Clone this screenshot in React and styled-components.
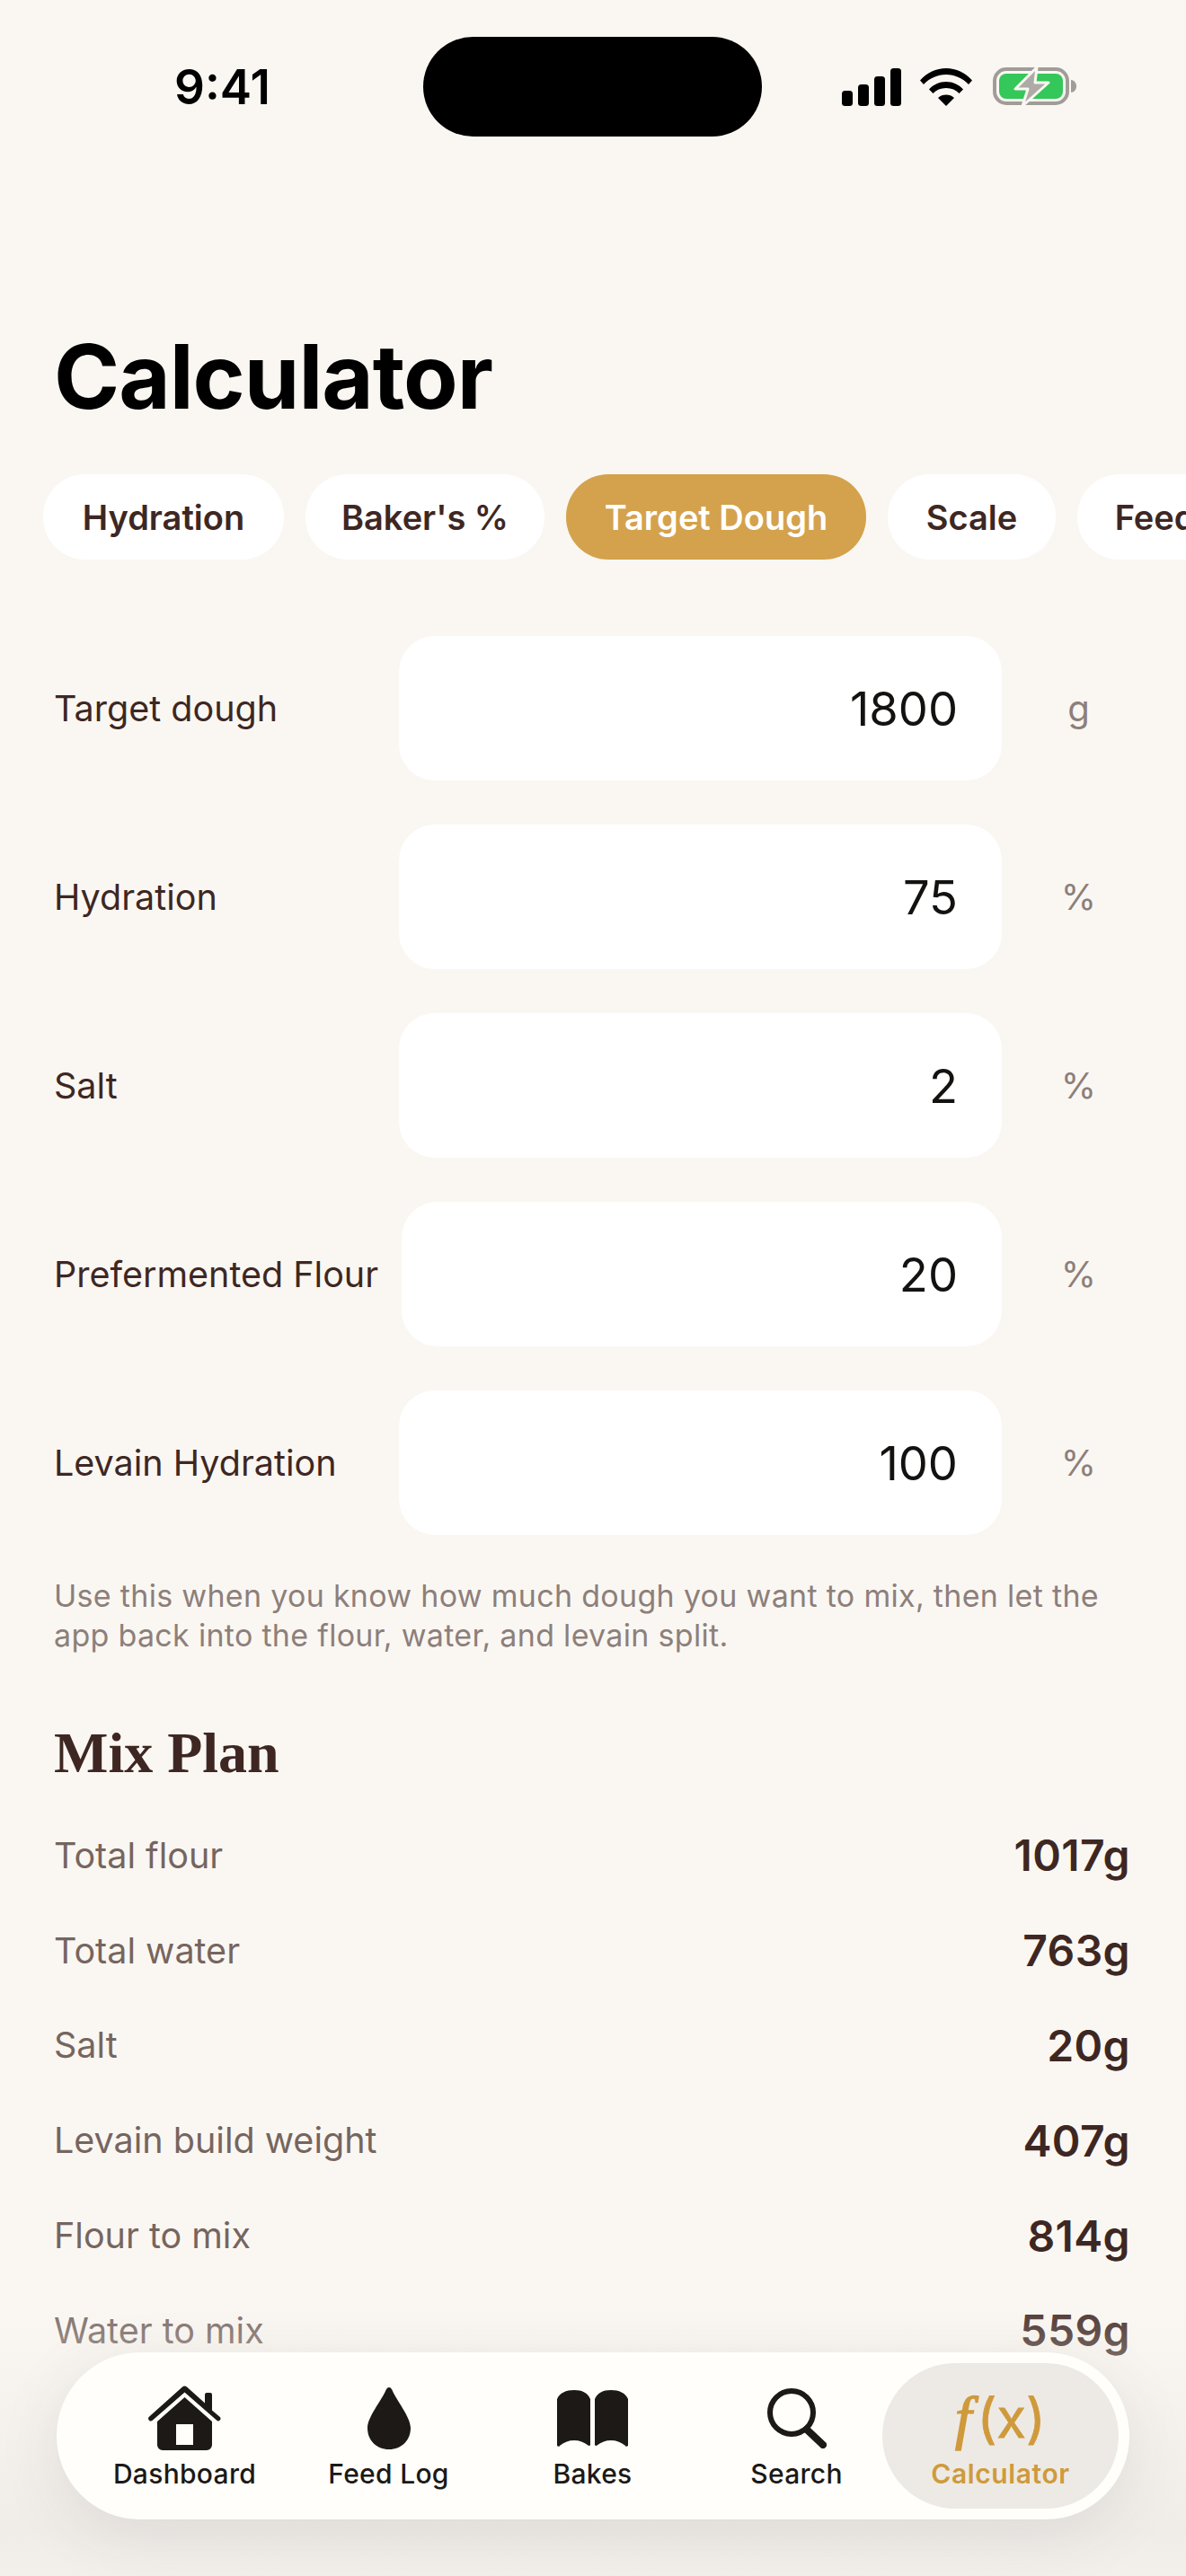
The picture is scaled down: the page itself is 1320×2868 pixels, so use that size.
import React from 'react';
import styled, { createGlobalStyle } from 'styled-components';

const GlobalStyle = createGlobalStyle`
  html, body {
    margin: 0;
    padding: 0;
    background: #faf7f2;
  }
  * {
    box-sizing: border-box;
  }
`;

const Screen = styled.div`
  position: relative;
  width: 1320px;
  height: 2868px;
  overflow: hidden;
  background: #faf7f2;
  font-family: Inter, "Liberation Sans", sans-serif;
  color: #3e2723;
`;

const StatusBar = styled.div`
  height: 361px;
  padding-top: 41px;
  display: grid;
  grid-template-columns: 471px 377px 1fr;
  align-items: start;
`;

const Time = styled.div`
  padding-left: 194px;
  padding-top: 29px;
  font-size: 53px;
  line-height: 54px;
  font-weight: 600;
  color: #000;
`;

const Island = styled.div`
  height: 111px;
  border-radius: 56px;
  background: #000;
`;

const StatusIcons = styled.div`
  display: flex;
  align-items: center;
  gap: 21px;
  padding-left: 89px;
  padding-top: 33px;
`;

const Title = styled.h1`
  margin: 0;
  padding-left: 60px;
  font-size: 99px;
  line-height: 116px;
  font-weight: 700;
  letter-spacing: -1px;
  color: #000;
`;

const ChipRow = styled.div`
  display: flex;
  gap: 24px;
  margin-top: 51px;
  padding-left: 48px;
  overflow: hidden;
`;

const Chip = styled.div`
  flex: none;
  width: ${(p) => p.$width}px;
  height: 95px;
  border-radius: 47px;
  display: flex;
  align-items: center;
  justify-content: center;
  font-size: 38px;
  font-weight: 600;
  white-space: nowrap;
  background: ${(p) => (p.$active ? '#d4a24c' : '#fff')};
  color: ${(p) => (p.$active ? '#fff' : '#3e2723')};
`;

const Form = styled.div`
  margin-top: 85px;
  padding: 0 60px;
  display: flex;
  flex-direction: column;
  gap: 49px;
`;

const FieldRow = styled.div`
  display: flex;
  align-items: center;
  gap: 26px;
`;

const FieldLabel = styled.div`
  flex: none;
  min-width: 358px;
  font-size: 39.5px;
  color: #3e2723;
`;

const Input = styled.div`
  flex: 1;
  height: 161px;
  padding-right: 49px;
  border-radius: 40px;
  background: #fff;
  display: flex;
  align-items: center;
  justify-content: flex-end;
  font-size: 52.5px;
  color: #141210;
`;

const Unit = styled.div`
  flex: none;
  width: 119px;
  text-align: center;
  font-size: 40px;
  color: #8d7f7b;
`;

const Note = styled.p`
  margin: 46px 0 0;
  padding: 0 60px;
  font-size: 34px;
  line-height: 44px;
  letter-spacing: 0.3px;
  color: #8d7f7b;
`;

const SectionTitle = styled.h2`
  margin: 71px 0 0;
  padding-left: 60px;
  font-family: "Liberation Serif", serif;
  font-size: 64px;
  line-height: 76px;
  font-weight: 700;
  color: #3e2723;
`;

const Plan = styled.div`
  margin-top: 23px;
  padding: 0 62px 0 60px;
  display: flex;
  flex-direction: column;
`;

const PlanRow = styled.div`
  height: 105.8px;
  display: flex;
  align-items: center;
  justify-content: space-between;
`;

const PlanLabel = styled.div`
  font-size: 39.5px;
  color: #76655f;
`;

const PlanValue = styled.div`
  font-size: 48px;
  font-weight: 600;
  letter-spacing: 0.4px;
  color: #3e2723;
`;

const BottomFade = styled.div`
  position: absolute;
  left: 0;
  right: 0;
  bottom: 0;
  height: 340px;
  background: linear-gradient(to bottom, rgba(250, 247, 242, 0), rgba(247, 244, 240, 0.17) 18%, rgba(242, 239, 235, 0.8) 60%, #f0ede9 85%, #f3f0ec);
`;

const TabBar = styled.nav`
  position: absolute;
  left: 63px;
  top: 2619px;
  width: 1194px;
  height: 186px;
  padding: 0 29px;
  border-radius: 93px;
  background: #fffefa;
  box-shadow: 0 16px 70px rgba(60, 50, 40, 0.1);
  display: grid;
  grid-template-columns: repeat(5, 227px);
`;

const Tab = styled.div`
  display: flex;
  flex-direction: column;
  align-items: center;
  border-radius: 81px;
  padding-top: ${(p) => (p.$active ? '24px' : '36px')};
  margin: ${(p) => (p.$active ? '12px -18px 12px -18px' : '0')};
  background: ${(p) => (p.$active ? '#edeae5' : 'transparent')};
  color: ${(p) => (p.$active ? '#cf9a3c' : '#1c1917')};
`;

const TabIcon = styled.div`
  height: 74px;
  display: flex;
  align-items: center;
  justify-content: center;
`;

const TabLabel = styled.div`
  margin-top: 6px;
  font-size: 30px;
  line-height: 38px;
  font-weight: ${(p) => (p.$active ? 600 : 500)};
  letter-spacing: ${(p) => (p.$active ? '0.6px' : '0.3px')};
`;

const FxGlyph = styled.div`
  font-size: 60px;
  line-height: 74px;
  font-weight: 400;
  white-space: nowrap;
  -webkit-text-stroke: 0.8px #cf9a3c;

  i {
    font-family: "Liberation Serif", serif;
    font-size: 66px;
    margin-right: 6px;
    -webkit-text-stroke: 1.6px #cf9a3c;
  }
`;

const SignalIcon = () => (
  <svg width="66" height="42" viewBox="0 0 66 42" fill="#000">
    <rect x="0" y="25" width="12" height="17" rx="3.5" />
    <rect x="18" y="18" width="12" height="24" rx="3.5" />
    <rect x="36" y="9" width="12" height="33" rx="3.5" />
    <rect x="54" y="0" width="12" height="42" rx="3.5" />
  </svg>
);

const WifiIcon = () => (
  <svg width="58" height="42" viewBox="0 0 58 42" fill="#000">
    <path d="M0 13.5C7.5 5 18 0 29 0s21.500 5 29 13.500l-4 4.500C47.500 11 38.500 7 29 7S10.500 11 4 18z" />
    <path d="M10 23.500C15 18 21.500 15 29 15s14 3 19 8.500l-4.500 4.500C40 24 35 22 29 22s-11 2-14.500 6z" />
    <path d="M20 33c2.500-2.500 5.500-3.500 9-3.500s6.500 1 9 3.500l-9 9z" />
  </svg>
);

const BatteryIcon = () => (
  <svg width="96" height="46" viewBox="-2 0 96 46">
    <rect x="2" y="3" width="81" height="38" rx="13" fill="none" stroke="#a09d99" strokeWidth="4" />
    <rect x="7" y="8" width="71" height="28" rx="8" fill="#34c759" />
    <path d="M87 15c4 .5 6 3.500 6 7s-2 6.500-6 7z" fill="#a09d99" />
    <path d="M49 1L25 25h14l-6 19 29-26H47z" fill="#aeaba7" stroke="#faf7f2" strokeWidth="3" strokeLinejoin="round" />
  </svg>
);

const HouseIcon = () => (
  <svg width="81" height="72" viewBox="0 0 81 72" fill="#1c1917">
    <path d="M1.200 34.500L38 1.500a4 4 0 0 1 5 0L63 19.500V10a2 2 0 0 1 2-2h4a2 2 0 0 1 2 2v17.500l8.800 7.500a2.600 2.600 0 0 1-3.500 3.800L40.500 7.500 4.700 38.800a2.500 2.500 0 0 1-3.500-4.300z" />
    <path fillRule="evenodd" d="M40.500 13L71 40v26a6 6 0 0 1-6 6H16a6 6 0 0 1-6-6V40zM31 43v23h19V43z" />
  </svg>
);

const DropIcon = () => (
  <svg width="48" height="69" viewBox="0 0 48 69" fill="#1c1917">
    <path d="M24 0c1.500 0 2.500 1 3.500 3C32 14 48 33 48 45c0 14-10 24-24 24S0 59 0 45C0 33 16 14 20.500 3c1-2 2-3 3.500-3z" />
  </svg>
);

const BookIcon = () => (
  <svg width="79" height="63" viewBox="0 0 79 63" fill="#1c1917">
    <path d="M0 10C3 3 10 0 19 0s15 3 18 10v50a1.500 1.500 0 0 1-2.500 1.500C30 58 25 56 19 56S8 58 3.500 61.500A1.500 1.500 0 0 1 0 60z" />
    <path d="M42 10c3-7 9-10 18-10s16 3 19 10v50a1.500 1.500 0 0 1-3.500 1.500C71 58 66 56 60 56s-11 2-15.500 5.500A1.500 1.500 0 0 1 42 60z" />
  </svg>
);

const SearchIcon = () => (
  <svg width="66" height="67" viewBox="0 0 66 67" fill="none" stroke="#1c1917" strokeLinecap="round">
    <circle cx="27" cy="27" r="24" strokeWidth="6" />
    <path d="M44 46L62 63" strokeWidth="8" />
  </svg>
);

const fields = [
  ['Target dough', '1800', 'g'],
  ['Hydration', '75', '%'],
  ['Salt', '2', '%'],
  ['Prefermented Flour', '20', '%'],
  ['Levain Hydration', '100', '%'],
];

const plan = [
  ['Total flour', '1017g'],
  ['Total water', '763g'],
  ['Salt', '20g'],
  ['Levain build weight', '407g'],
  ['Flour to mix', '814g'],
  ['Water to mix', '559g'],
];

const chips = [
  ['Hydration', 268],
  ["Baker's %", 266],
  ['Target Dough', 334],
  ['Scale', 187],
  ['Feeding', 230],
];

const tabs = [
  ['Dashboard', <HouseIcon />],
  ['Feed Log', <DropIcon />],
  ['Bakes', <BookIcon />],
  ['Search', <SearchIcon />],
];

export default function App() {
  return (
    <Screen>
      <GlobalStyle />
      <StatusBar>
        <Time>9:41</Time>
        <Island />
        <StatusIcons>
          <SignalIcon />
          <WifiIcon />
          <BatteryIcon />
        </StatusIcons>
      </StatusBar>
      <Title>Calculator</Title>
      <ChipRow>
        {chips.map(([label, width]) => (
          <Chip key={label} $width={width} $active={label === 'Target Dough'}>{label}</Chip>
        ))}
      </ChipRow>
      <Form>
        {fields.map(([label, value, unit]) => (
          <FieldRow key={label}>
            <FieldLabel>{label}</FieldLabel>
            <Input>{value}</Input>
            <Unit>{unit}</Unit>
          </FieldRow>
        ))}
      </Form>
      <Note>Use this when you know how much dough you want to mix, then let the app back into the flour, water, and levain split.</Note>
      <SectionTitle>Mix Plan</SectionTitle>
      <Plan>
        {plan.map(([label, value]) => (
          <PlanRow key={label}>
            <PlanLabel>{label}</PlanLabel>
            <PlanValue>{value}</PlanValue>
          </PlanRow>
        ))}
      </Plan>
      <BottomFade />
      <TabBar>
        {tabs.map(([label, icon]) => (
          <Tab key={label}>
            <TabIcon>{icon}</TabIcon>
            <TabLabel>{label}</TabLabel>
          </Tab>
        ))}
        <Tab $active>
          <TabIcon>
            <FxGlyph><i>f</i>(x)</FxGlyph>
          </TabIcon>
          <TabLabel $active>Calculator</TabLabel>
        </Tab>
      </TabBar>
    </Screen>
  );
}
